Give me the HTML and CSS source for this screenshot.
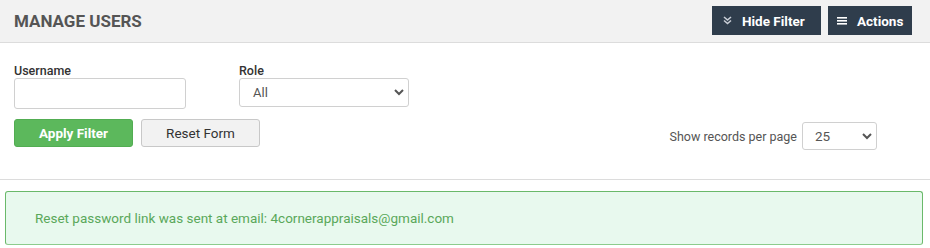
FILE: index.html
```html
<!DOCTYPE html>
<html>
<head>
<meta charset="utf-8">
<link rel="stylesheet" href="styles.css">
</head>
<body>
<div class="page">
  <div class="header">
    <h1 class="title">MANAGE USERS</h1>
    <div class="header-actions">
      <button class="btn-dark btn-hide"><svg class="ico" width="9" height="9" viewBox="0 0 9 9"><path d="M1 1 L4.5 4 L8 1 M1 4.5 L4.5 7.5 L8 4.5" fill="none" stroke="#c9ced6" stroke-width="1.6"/></svg><span>Hide Filter</span></button>
      <button class="btn-dark btn-actions"><svg class="ico" width="10" height="9" viewBox="0 0 10 9"><rect x="0" y="1" width="10" height="1.6" fill="#fff"/><rect x="0" y="4" width="10" height="1.6" fill="#fff"/><rect x="0" y="7" width="10" height="1.6" fill="#fff"/></svg><span>Actions</span></button>
    </div>
  </div>
  <div class="filter">
    <div class="fields">
      <div class="field">
        <label class="label">Username</label>
        <input class="input" type="text">
      </div>
      <div class="field role">
        <label class="label">Role</label>
        <div class="select select-role"><span>All</span><svg width="10" height="7" viewBox="0 0 10 7"><path d="M1 1 L5 5 L9 1" fill="none" stroke="#555" stroke-width="2"/></svg></div>
      </div>
    </div>
    <div class="row2">
      <div class="buttons">
        <button class="btn-green">Apply Filter</button>
        <button class="btn-light">Reset Form</button>
      </div>
      <div class="perpage">
        <span class="perpage-label">Show records per page</span>
        <div class="select select-pp"><span>25</span><svg width="10" height="7" viewBox="0 0 10 7"><path d="M1 1 L5 5 L9 1" fill="none" stroke="#555" stroke-width="2"/></svg></div>
      </div>
    </div>
  </div>
  <div class="alert">Reset password link was sent at email: 4cornerappraisals@gmail.com</div>
</div>
</body>
</html>
```
FILE: styles.css
```css
* { box-sizing: border-box; }
html, body { margin: 0; padding: 0; background: #fff; }
body { font-family: Roboto, "Liberation Sans", Arial, sans-serif; color: #333; width: 930px; height: 248px; overflow: hidden; }
.header {
  height: 43px;
  background: #f2f2f2;
  border-bottom: 1px solid #dcdcdc;
  display: flex;
  align-items: center;
  justify-content: space-between;
  padding: 0 18px 0 14px;
}
.title { margin: 0; font-size: 17px; font-weight: 700; color: #555; letter-spacing: 0; }
.header-actions { display: flex; gap: 7px; margin-top: -1px; }
.btn-dark {
  height: 29px;
  background: #2f3d4c;
  color: #fff;
  border: none;
  font-family: inherit;
  font-size: 13.5px;
  font-weight: 700;
  display: flex;
  align-items: center;
  white-space: nowrap;
  padding: 0;
}
.btn-dark .ico { flex-shrink: 0; }
.btn-hide { width: 109px; padding-left: 11px; }
.btn-hide .ico { margin-right: 10px; }
.btn-actions { width: 84px; padding-left: 9px; }
.btn-actions .ico { margin-right: 10px; }
.filter {
  height: 137px;
  border-bottom: 1px solid #dcdcdc;
  padding: 20px 14px 0 14px;
}
.fields { display: flex; gap: 53px; }
.field { display: flex; flex-direction: column; }
.label { font-size: 12.5px; font-weight: 500; color: #333; line-height: 15px; }
.input { width: 172px; height: 31px; border: 1px solid #d0d0d0; border-radius: 3px; margin: 0; padding: 0; }
.select {
  border: 1px solid #d0d0d0;
  border-radius: 3px;
  display: flex;
  align-items: center;
  justify-content: space-between;
  font-size: 13px;
  color: #555;
}
.select-role { width: 170px; height: 29px; padding: 0 4px 0 13px; }
.row2 { display: flex; justify-content: space-between; align-items: flex-start; margin-top: 10px; padding-right: 39px; }
.buttons { display: flex; gap: 8px; }
.btn-green, .btn-light {
  width: 119px; height: 28px;
  font-family: inherit;
  font-size: 13.5px;
  border-radius: 3px;
  padding: 0;
}
.btn-green { background: #5cb85c; color: #fff; border: 1px solid #52ad52; font-weight: 700; }
.btn-light { background: #f2f2f2; color: #333; border: 1px solid #c8c8c8; }
.perpage { display: flex; align-items: center; gap: 5px; margin-top: 3px; }
.perpage-label { font-size: 12.5px; color: #555; }
.select-pp { width: 75px; height: 28px; padding: 0 4px 0 12px; font-size: 13.5px; }
.alert {
  margin: 11px 7px 0 5px;
  height: 54px;
  background: #e8f9ee;
  border: 1px solid #6ab96a;
  border-bottom-color: #8ccc8c;
  border-radius: 3px;
  color: #5aa85a;
  font-size: 13.5px;
  display: flex;
  align-items: center;
  padding: 0 0 0 29px;
}
```
